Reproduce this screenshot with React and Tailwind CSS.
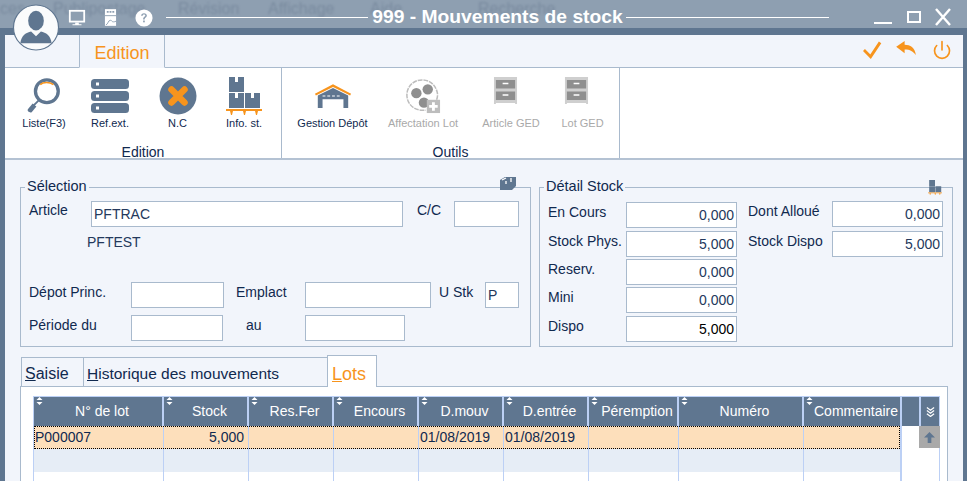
import React from "react";
import { Power } from "lucide-react";

const columns = [
  { label: "N° de lot", w: "w-[130px]" },
  { label: "Stock", w: "w-[85px]" },
  { label: "Res.Fer", w: "w-[85px]" },
  { label: "Encours", w: "w-[85px]" },
  { label: "D.mouv", w: "w-[85px]" },
  { label: "D.entrée", w: "w-[85px]" },
  { label: "Péremption", w: "w-[90px]" },
  { label: "Numéro", w: "w-[125px]" },
  { label: "Commentaire", w: "w-[98px]" },
];

const row = ["P000007", "5,000", "", "", "01/08/2019", "01/08/2019", "", "", ""];

const Avatar = () => (
  <svg viewBox="0 0 48 48" className="w-full h-full">
    <circle cx="24" cy="24" r="23" fill="#fafbfc" stroke="#5f7690" strokeWidth="1.2" />
    <ellipse cx="24" cy="17" rx="8" ry="10" fill="#5f7690" />
    <path d="M8 40c1-8 6-11 11-12l5 5 5-5c5 1 10 4 11 12z" fill="#5f7690" />
  </svg>
);

const MonitorIcon = () => (
  <svg viewBox="0 0 20 20" className="w-[18px] h-[18px]">
    <path d="M1 1h18v14H1z" fill="#fff" />
    <path d="M3 3h14v10H3z" fill="#8e9fb1" />
    <path d="M8 15h4v2h3v1H5v-1h3z" fill="#fff" />
  </svg>
);

const DocIcon = () => (
  <svg viewBox="0 0 14 20" className="w-[13px] h-[19px]">
    <path d="M1 1h12v18H1z" fill="#fff" />
    <path d="M3 3h2v2H3zM6 3h2v2H6zM9 3h2v2H9z" fill="#8e9fb1" />
    <path d="M1 8h12M2 18c3-1 2-5 5-5 2 0 1 3 6 1" stroke="#8e9fb1" strokeWidth="1" fill="none" />
  </svg>
);

const HelpIcon = () => (
  <svg viewBox="0 0 20 20" className="w-[18px] h-[18px]">
    <circle cx="10" cy="10" r="9.5" fill="#fff" />
    <path d="M6.8 7.6c0-2 1.4-3 3.2-3s3.2 1 3.2 2.7c0 2.3-2.5 2.3-2.5 4.4H9c0-3 2.4-3 2.4-4.4 0-.7-.6-1.1-1.4-1.1-.9 0-1.4.5-1.4 1.4z" fill="#8e9fb1" />
    <rect x="9" y="12.8" width="1.9" height="2" fill="#8e9fb1" />
  </svg>
);

const SearchIcon = () => (
  <svg viewBox="0 0 40 40" className="w-[38px] h-[38px]">
    <circle cx="23" cy="15" r="12" fill="#fff" stroke="#5f7690" strokeWidth="3.5" />
    <path d="M16 8c3-3 10-3 14 0" stroke="#f7941d" strokeWidth="1.6" fill="none" />
    <path d="M15 24L7 32" stroke="#5f7690" strokeWidth="2" />
    <path d="M3 34l5-6 4 3-5 6c-2 1-5-1-4-3z" fill="#5f7690" />
  </svg>
);

const ServerIcon = () => (
  <svg viewBox="0 0 38 34" className="w-[38px] h-[34px]">
    {[0, 12, 24].map((y) => (
      <g key={y}>
        <rect x="0" y={y} width="38" height="10" rx="3.5" fill="#5f7690" />
        <rect x="5" y={y + 3.5} width="3" height="3" fill="#fff" />
      </g>
    ))}
  </svg>
);

const CrossIcon = () => (
  <svg viewBox="0 0 38 38" className="w-[38px] h-[38px]">
    <circle cx="19" cy="19" r="18.5" fill="#5f7690" />
    <path d="M12.5 12.5l13 13M25.5 12.5l-13 13" stroke="#f7941d" strokeWidth="6.5" strokeLinecap="round" />
  </svg>
);

const BoxesIcon = ({ small }) => (
  <svg viewBox="0 0 36 38" className={small ? "w-[14px] h-[15px]" : "w-[36px] h-[38px]"}>
    <path d="M3 0h15v15H3zM3 16h15v15H3zM19 16h15v15H19z" fill="#5f7690" />
    {!small && <path d="M9 0h3v5H9zM9 16h3v5H9zM25 16h3v5h-3z" fill="#fff" />}
    <path d="M0 32h36v2H0zM4 34h3l-1 4H5zM17 34h3l-1 4h-1zM29 34h3l-1 4h-1z" fill="#f7941d" />
  </svg>
);

const DepotIcon = () => (
  <svg viewBox="0 0 40 25" className="w-[38px] h-[24px]">
    <path d="M1 10L20 0l19 10-1 2L20 3 2 12z" fill="#f7941d" />
    <path d="M4 12l16-8 16 8v13h-5V16H9v9H4z" fill="#5f7690" />
    <path d="M9 12h3v1H9zM14 12h3v1h-3zM19 12h3v1h-3zM24 12h3v1h-3z" fill="#fff" />
  </svg>
);

const LotIcon = () => (
  <svg viewBox="0 0 38 38" className="w-[36px] h-[36px]">
    <path d="M30 28c4-4 5-9 4-13C32 7 26 2 18 2 9 2 2 9 2 18s7 16 16 16h4" fill="none" stroke="#bdbdbd" strokeWidth="1.6" strokeDasharray="5 1" />
    <circle cx="12" cy="16" r="5.5" fill="#8f8f8f" />
    <circle cx="24" cy="12" r="5.5" fill="#8f8f8f" />
    <circle cx="20" cy="26" r="5.5" fill="#8f8f8f" />
    <rect x="23" y="23" width="14" height="14" fill="#bdbdbd" />
    <path d="M28.5 25.5h3v3h3v3h-3v3h-3v-3h-3v-3h3z" fill="#fff" />
  </svg>
);

const DrawerIcon = () => (
  <svg viewBox="0 0 26 30" className="w-[25px] h-[29px] -ml-[12px] -mt-[10px]">
    <path d="M1 1h24v28h-2v-1H3v1H1z" fill="#cfcfcf" />
    <path d="M3 4h20v9H3zM3 16h20v9H3z" fill="#8f8f8f" />
    <path d="M10 7h6v1.5h-6zM10 19h6v1.5h-6z" fill="#fff" />
  </svg>
);

const SortMark = () => (
  <svg viewBox="0 0 7 8" className="absolute left-[2px] top-0 w-[7px] h-[8px]">
    <path d="M3.5 0L6.5 3H.5zM3.5 8L.5 5h6z" fill="#fff" />
  </svg>
);

const RibbonButton = ({ icon, label, w, disabled }) => (
  <div className={`${w} flex flex-col items-center`}>
    <div className="h-[41px] flex items-center justify-center">{icon}</div>
    <span className={`mt-[1px] text-[11px] leading-[13px] whitespace-nowrap ${disabled ? "text-[#a9a9a9]" : "text-[#10294f]"}`}>
      {label}
    </span>
  </div>
);

const Input = ({ w, h = "h-[26px]", children, align = "text-left", dark }) => (
  <div
    className={`${w} ${h} ${align} ${dark ? "text-black" : "text-[#24395c]"} bg-white border border-[#a9bacd] px-[2px] pt-[3px] text-[14px] leading-[18px] shrink-0`}
  >
    {children}
  </div>
);

const Label = ({ w, className = "", children }) => (
  <span className={`${w} ${className} shrink-0 text-[14px] leading-[16px] text-[#10294f] whitespace-nowrap`}>
    {children}
  </span>
);

const StockRow = ({ label, value, mt, dark }) => (
  <div className={`flex items-start ${mt}`}>
    <Label w="w-[78px]" className="pt-[2px]">{label}</Label>
    <Input w="w-[111px]" align="text-right" dark={dark}>{value}</Input>
  </div>
);

const App = () => {
  return (
    <div className="relative w-[967px] h-[481px] overflow-hidden bg-[#5f7690] font-['Liberation_Sans',Arial,sans-serif]">
      {/* title bar */}
      <div className="relative h-[28px] bg-[#8e9fb1] flex items-start overflow-hidden">
        <div className="absolute left-0 top-0 flex text-[16px] leading-[18px] text-[#7a8b9f] blur-[1px] whitespace-nowrap">
          <span className="w-[53px]">ces</span>
          <span className="w-[125px]">Publipostage</span>
          <span className="w-[90px]">Révision</span>
          <span className="w-[102px]">Affichage</span>
          <span className="w-[108px]">Aide</span>
          <span>Recherche</span>
        </div>
        <div className="relative flex items-center gap-[18px] ml-[68px] mt-[8px]">
          <MonitorIcon />
          <DocIcon />
          <HelpIcon />
        </div>
        <div className="relative flex items-center ml-[13px] mt-[17px] h-px w-[663px]">
          <div className="h-px w-[202px] bg-white" />
          <span className="w-[258px] -mt-[2px] pl-[1px] text-center text-[19.25px] leading-[20px] font-bold text-white whitespace-nowrap">
            999 - Mouvements de stock
          </span>
          <div className="h-px flex-1 bg-white" />
        </div>
        <div className="relative flex items-start ml-[45px] mt-[9px] gap-[15px]">
          <div className="w-[18px] h-[2px] bg-white mt-[13px]" />
          <div className="w-[14px] h-[12px] border-[2px] border-white mt-[2px]" />
          <svg viewBox="0 0 18 18" className="w-[18px] h-[18px] -mt-[1px] -ml-[2px]">
            <path d="M2 1l14 16M16 1L2 17" stroke="#fff" strokeWidth="2.4" />
          </svg>
        </div>
      </div>
      <div className="h-[7px]" />

      {/* avatar sits over the bar */}
      <div className="absolute left-[12px] top-[4px] w-[48px] h-[47px]">
        <Avatar />
      </div>

      <div className="ml-[5px] mr-[4px] h-[446px] bg-[#f2f5fb]">
        {/* ribbon tabs */}
        <div className="relative h-[33px] flex items-end border-b border-[#a9bacd]">
          <div className="ml-[74px] w-[86px] h-[33px] -mb-px bg-[#f2f5fb] border-x border-b border-[#a9bacd] border-b-[#f2f5fb] text-center text-[18px] leading-[36px] text-[#f7941d]">
            Edition
          </div>
          <div className="ml-auto mr-[11px] mb-[7px] flex items-center">
            <svg viewBox="0 0 20 18" className="w-[19px] h-[18px]">
              <path d="M1 9l7 7L18 1" fill="none" stroke="#f7941d" strokeWidth="3" />
            </svg>
            <svg viewBox="0 0 22 16" className="w-[21px] h-[15px] ml-[14px] -mt-[3px]">
              <path d="M0 6L9 0v4c6 0 11 3 12 11-3-4-6-6-12-6v4z" fill="#f7941d" />
            </svg>
            <Power size={20} strokeWidth={2} className="text-[#f7941d] ml-[15px]" />
          </div>
        </div>

        {/* ribbon */}
        <div className="h-[92px] bg-white border-b-2 border-[#b4c2d3] flex">
          <div className="w-[277px] border-r border-[#a9bacd] flex flex-col">
            <div className="flex pt-[7px] pl-[7px]">
              <RibbonButton w="w-[64px]" icon={<SearchIcon />} label="Liste(F3)" />
              <RibbonButton w="w-[68px]" icon={<ServerIcon />} label="Ref.ext." />
              <RibbonButton w="w-[67px]" icon={<CrossIcon />} label="N.C" />
              <RibbonButton w="w-[66px]" icon={<BoxesIcon />} label="Info. st." />
            </div>
            <span className="mt-[14px] text-center text-[14px] leading-[16px] text-[#10294f]">Edition</span>
          </div>
          <div className="w-[338px] border-r border-[#a9bacd] flex flex-col">
            <div className="flex pt-[7px] pl-[13px]">
              <RibbonButton w="w-[75px]" icon={<DepotIcon />} label="Gestion Dépôt" />
              <RibbonButton w="w-[106px]" icon={<LotIcon />} label="Affectation Lot" disabled />
              <RibbonButton w="w-[70px]" icon={<DrawerIcon />} label="Article GED" disabled />
              <RibbonButton w="w-[73px]" icon={<DrawerIcon />} label="Lot GED" disabled />
            </div>
            <span className="mt-[14px] text-center text-[14px] leading-[16px] text-[#10294f]">Outils</span>
          </div>
        </div>

        {/* fieldsets */}
        <div className="flex ml-[15px] mt-[27px] gap-[8px]">
          <div className="relative w-[511px] h-[160px] border border-[#a9bacd]">
            <span className="absolute left-[4px] -top-[10px] px-[2px] bg-[#f2f5fb] text-[14.5px] leading-[16px] text-[#10294f]">Sélection</span>
            <svg viewBox="0 0 16 14" className="absolute right-[14px] -top-[12px] w-[16px] h-[14px]">
              <path d="M0 4l5-3h11v9l-4 4H0z" fill="#5f7690" />
              <path d="M2 4l4-2M6 5v3M11 2v4" stroke="#fff" strokeWidth="1.3" />
            </svg>

            <div className="flex items-start mt-[13px] pl-[8px]">
              <Label w="w-[62px]" className="pt-[1px]">Article</Label>
              <Input w="w-[312px]">PFTRAC</Input>
              <Label w="w-[37px]" className="ml-[14px] pt-[1px]">C/C</Label>
              <Input w="w-[65px]" />
            </div>
            <div className="mt-[7px] pl-[66px] text-[14px] leading-[16px] text-[#24395c]">PFTEST</div>

            <div className="flex items-start mt-[32px] pl-[8px]">
              <Label w="w-[102px]" className="pt-[2px]">Dépot Princ.</Label>
              <Input w="w-[93px]" />
              <Label w="w-[69px]" className="ml-[12px] pt-[2px]">Emplact</Label>
              <Input w="w-[126px]" />
              <Label w="w-[46px]" className="ml-[8px] pt-[2px]">U Stk</Label>
              <Input w="w-[34px]">P</Input>
            </div>
            <div className="flex items-start mt-[7px] pl-[8px]">
              <Label w="w-[102px]" className="pt-[2px]">Période du</Label>
              <Input w="w-[92px]" />
              <Label w="w-[59px]" className="ml-[23px] pt-[2px]">au</Label>
              <Input w="w-[100px]" />
            </div>
          </div>

          <div className="relative w-[414px] h-[160px] border border-[#a9bacd]">
            <span className="absolute left-[4px] -top-[10px] px-[2px] bg-[#f2f5fb] text-[14.5px] leading-[16px] text-[#10294f]">Détail Stock</span>
            <div className="absolute right-[10px] -top-[8px] flex">
              <BoxesIcon small />
            </div>
            <div className="flex mt-[14px] pl-[8px]">
              <div className="flex flex-col">
                <StockRow label="En Cours" value="0,000" />
                <StockRow label="Stock Phys." value="5,000" mt="mt-[3px]" />
                <StockRow label="Reserv." value="0,000" mt="mt-[2px]" />
                <StockRow label="Mini" value="0,000" mt="mt-[2px]" />
                <StockRow label="Dispo" value="5,000" mt="mt-[3px]" dark />
              </div>
              <div className="flex flex-col ml-[11px] -mt-px">
                <div className="flex items-start">
                  <Label w="w-[84px]" className="pt-[2px]">Dont Alloué</Label>
                  <Input w="w-[111px]" align="text-right">0,000</Input>
                </div>
                <div className="flex items-start mt-[4px]">
                  <Label w="w-[84px]" className="pt-[2px]">Stock Dispo</Label>
                  <Input w="w-[111px]" align="text-right">5,000</Input>
                </div>
              </div>
            </div>
          </div>
        </div>

        {/* lower tabs */}
        <div className="relative flex items-end h-[32px] mt-[7px] ml-[16px] text-[#10294f]">
          <div className="w-[62px] h-[29px] border-l border-t border-[#a9bacd] pl-[3px] text-[16px] leading-[31px] bg-[#f2f5fb]">
            <span className="underline">S</span>aisie
          </div>
          <div className="w-[244px] h-[29px] border-l border-t border-[#a9bacd] pl-[3px] text-[15.5px] leading-[31px] bg-[#f2f5fb]">
            <span className="underline">H</span>istorique des mouvements
          </div>
          <div className="w-[50px] h-[32px] -mb-px z-10 bg-white border-x border-t border-[#a9bacd] pl-[4px] leading-[36px] text-[18px] text-[#f7941d]">
            <span className="underline">L</span>ots
          </div>
        </div>

        {/* grid panel */}
        <div className="ml-[15px] w-[928px] h-[101px] bg-white border border-[#a9bacd] pt-[9px] pl-[13px]">
          <div className="flex h-[30px] w-[907px] -ml-px border-t border-x border-[#bcd0f5] bg-[#5f7690]">
            {columns.map((c) => (
              <div
                key={c.label}
                className={`relative ${c.w} h-[29px] shrink-0 border-r-2 border-[#bcd0f5] pl-[8px] text-center text-[14px] leading-[28px] text-white whitespace-nowrap`}
              >
                <SortMark />
                {c.label}
              </div>
            ))}
            <div className="w-[17px] shrink-0" />
            <div className="w-[21px] h-[29px] shrink-0 border-l-2 border-[#bcd0f5] flex items-center justify-center">
              <svg viewBox="0 0 10 11" className="w-[9px] h-[11px]">
                <path d="M1 1l4 3 4-3M1 4.5l4 3 4-3M1 8l4 3 4-3" fill="none" stroke="#fff" strokeWidth="1.4" />
              </svg>
            </div>
          </div>
          <div className="flex -ml-px">
            <div className="w-[868px] border-x border-[#bcd0f5]">
              <div className="flex h-[23px] bg-[#fddfbb] outline-1 -outline-offset-1 outline-dotted outline-black">
                {row.map((val, i) => (
                  <div
                    key={i}
                    className={`${columns[i].w} shrink-0 border-r border-[#bcd0f5] px-[1px] text-[14px] leading-[22px] text-[#10294f] whitespace-nowrap ${i === 1 ? "text-right pr-[4px]" : ""}`}
                  >
                    {val}
                  </div>
                ))}
              </div>
              <div className="flex h-[23px] bg-[#e6edf6]">
                {columns.map((c) => (
                  <div key={c.label} className={`${c.w} shrink-0 border-r border-[#bcd0f5]`} />
                ))}
              </div>
              <div className="flex h-[10px] bg-white">
                {columns.map((c) => (
                  <div key={c.label} className={`${c.w} shrink-0 border-r border-[#bcd0f5]`} />
                ))}
              </div>
            </div>
            <div className="ml-[18px] w-[21px] h-[57px] border-r border-[#bcd0f5]">
              <div className="w-[21px] h-[22px] bg-[#a9a9a9] flex items-center justify-center">
                <svg viewBox="0 0 12 12" className="w-[11px] h-[11px]">
                  <path d="M6 0l6 6H8v6H4V6H0z" fill="#5f7690" />
                </svg>
              </div>
            </div>
          </div>
        </div>
      </div>
    </div>
  );
};

export default App;
